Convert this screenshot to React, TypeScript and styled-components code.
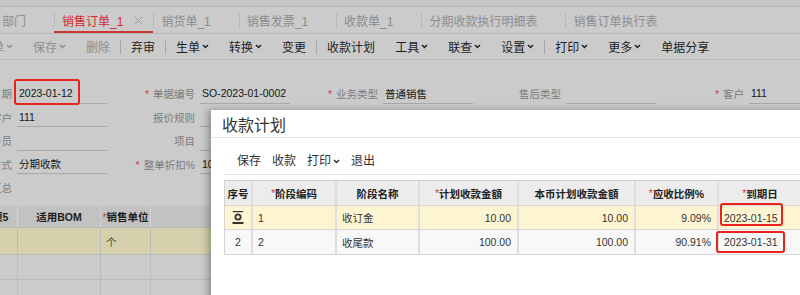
import React from 'react';
import styled, { createGlobalStyle } from 'styled-components';

const Global = createGlobalStyle`
  html, body { margin: 0; padding: 0; }
  body {
    width: 800px; height: 295px; overflow: hidden;
    font-family: "Liberation Sans", "Noto Sans CJK SC", sans-serif;
  }
`;

const Page = styled.div`
  position: relative;
  width: 800px;
  height: 295px;
  overflow: hidden;
  background: #cbcbcb;
  display: flex;
  flex-direction: column;
`;

const TopStrip = styled.div`
  height: 6px;
  flex-shrink: 0;
  background: #c5c5c5;
  border-bottom: 1px solid #b5b5b5;
`;

const TabBar = styled.div`
  height: 26px;
  flex-shrink: 0;
  display: flex;
  align-items: stretch;
  border-bottom: 1px solid #b9b9b9;
  font-size: 12px;
`;

const Tab = styled.div<{ $first?: boolean; $active?: boolean }>`
  position: relative;
  display: flex;
  align-items: center;
  gap: 11px;
  padding: ${p => (p.$first ? '0 28px 0 2px' : p.$active ? '0 10px 0 8px' : '0 28px 0 8px')};
  color: ${p => (p.$active ? '#d12c2c' : '#8b8b8b')};
  white-space: nowrap;
  box-shadow: ${p => (p.$active ? 'inset 0 -2px 0 #cc3535' : 'none')};
  &::before {
    content: '';
    display: ${p => (p.$first ? 'none' : 'block')};
    position: absolute;
    left: 0;
    top: 6px;
    height: 15px;
    width: 1px;
    background: #b7b7b7;
  }
`;

const Toolbar = styled.div`
  height: 25px;
  flex-shrink: 0;
  display: flex;
  align-items: center;
  margin-left: -18px;
  border-bottom: 1px solid #b9b9b9;
  font-size: 12px;
`;

const ToolItem = styled.div<{ $disabled?: boolean }>`
  display: flex;
  align-items: center;
  gap: 2px;
  padding: 0 10px;
  white-space: nowrap;
  color: ${p => (p.$disabled ? '#8e8e8e' : '#1e1e1e')};
`;

const ToolSep = styled.div`
  width: 1px;
  height: 14px;
  background: #a9a9a9;
`;

const Form = styled.div`
  display: grid;
  grid-template-columns: repeat(5, 183px);
  grid-auto-rows: 23.5px;
  margin-left: -76px;
  padding-top: 22px;
  flex-shrink: 0;
`;

const Field = styled.div`
  display: flex;
  align-items: center;
  gap: 5px;
`;

const Label = styled.span`
  width: 88px;
  flex-shrink: 0;
  text-align: right;
  font-size: 10.5px;
  color: #7b7b7b;
  white-space: nowrap;
`;

const Star = styled.span`
  color: #cf3d46;
  margin-right: 4px;
`;

const Value = styled.div`
  position: relative;
  width: 90px;
  height: 20px;
  box-sizing: border-box;
  padding-left: 2px;
  display: flex;
  align-items: center;
  border-bottom: 1px solid #a9a9a9;
  font-size: 10.5px;
  color: #151515;
  white-space: nowrap;
`;

const Mark = styled.span<{ $l: number; $t: number; $w: number; $h: number }>`
  position: absolute;
  left: ${p => p.$l}px;
  top: ${p => p.$t}px;
  width: ${p => p.$w}px;
  height: ${p => p.$h}px;
  box-sizing: border-box;
  border: 2px solid #e8221e;
  border-radius: 3px;
  pointer-events: none;
`;

const BgGrid = styled.div`
  margin-top: 6.5px;
  margin-left: -48px;
  display: flex;
  flex-direction: column;
`;

const BgRow = styled.div<{ $head?: boolean; $yellow?: boolean; $h: number }>`
  display: grid;
  grid-template-columns: 66px 83px 50px 220px 220px;
  height: ${p => p.$h}px;
  box-sizing: border-box;
  background: ${p => (p.$head ? '#c2c2c2' : p.$yellow ? '#d5d1ad' : '#cbcbcb')};
  border-bottom: 1px solid #b9b9b9;
`;

const BgCell = styled.div<{ $head?: boolean }>`
  display: flex;
  align-items: center;
  justify-content: ${p => (p.$head ? 'center' : 'flex-start')};
  padding-left: ${p => (p.$head ? 0 : 5)}px;
  border-right: 1px solid ${p => (p.$head ? '#d3d3d3' : '#bbbbbb')};
  font-size: 10.5px;
  font-weight: ${p => (p.$head ? 700 : 400)};
  color: ${p => (p.$head ? '#1c1c1c' : '#3d4a3d')};
  white-space: nowrap;
  overflow: hidden;
`;

const HeadStar = styled.span`
  color: #d0434b;
  font-weight: 400;
`;

const Modal = styled.div`
  position: absolute;
  left: 211px;
  top: 110px;
  right: -20px;
  bottom: -20px;
  background: #ffffff;
  box-shadow: -3px 0 7px rgba(0, 0, 0, 0.3);
  display: flex;
  flex-direction: column;
`;

const ModalTitle = styled.div`
  height: 27px;
  flex-shrink: 0;
  display: flex;
  align-items: center;
  padding-left: 11px;
  border-bottom: 1px solid #e4e4e4;
  font-size: 16px;
  color: #333;
`;

const ModalBody = styled.div`
  padding-left: 13px;
  display: flex;
  flex-direction: column;
`;

const ModalToolbar = styled.div`
  height: 37px;
  box-sizing: border-box;
  padding: 12px 0 0 13px;
  display: flex;
  align-items: flex-start;
  gap: 11px;
  border-bottom: 1px solid #e2e2e2;
  font-size: 12px;
  color: #333;
  line-height: 23px;
`;

const ModalTool = styled.div`
  display: flex;
  align-items: center;
  gap: 2px;
`;

const PlanTable = styled.div`
  margin-top: 5px;
  border-top: 1px solid #d3d3d3;
  border-left: 1px solid #d3d3d3;
  display: flex;
  flex-direction: column;
`;

const PlanRow = styled.div<{ $bg: string; $h: number }>`
  display: grid;
  grid-template-columns: 28px 84px 83px 99px 117px 83px 84px;
  height: ${p => p.$h}px;
  box-sizing: border-box;
  background: ${p => p.$bg};
  border-bottom: 1px solid #d6d6d6;
`;

const PlanCell = styled.div<{ $align?: 'left' | 'right' | 'center'; $head?: boolean }>`
  position: relative;
  display: flex;
  align-items: center;
  justify-content: ${p => (p.$align === 'right' ? 'flex-end' : p.$align === 'center' ? 'center' : 'flex-start')};
  padding: 0 ${p => (p.$align === 'right' ? 6 : 0)}px 0 ${p => (p.$align === 'left' ? 5 : 0)}px;
  border-right: 2px solid #dedede;
  font-size: 10.5px;
  font-weight: ${p => (p.$head ? 700 : 400)};
  color: ${p => (p.$head ? '#222' : '#333')};
  white-space: nowrap;
`;

const Chevron = () => (
  <svg width="7" height="5" viewBox="0 0 7 5" fill="none">
    <polyline points="1,1 3.5,3.6 6,1" stroke="currentColor" strokeWidth="1.4" />
  </svg>
);

const CloseIcon = () => (
  <svg width="9" height="9" viewBox="0 0 9 9">
    <path d="M0.5 0.5 L8.5 8.5 M8.5 0.5 L0.5 8.5" stroke="#9a9a9a" strokeWidth="1" />
  </svg>
);

const RowIcon = () => (
  <svg width="12" height="13" viewBox="0 0 12 13">
    <rect x="1" y="0" width="10" height="1.2" fill="#333" />
    <circle cx="6" cy="6" r="2.6" fill="none" stroke="#333" strokeWidth="1.8" />
    <rect x="0.5" y="11" width="11" height="2" fill="#333" />
  </svg>
);

const tabs = ['销货单_1', '销售发票_1', '收款单_1', '分期收款执行明细表', '销售订单执行表'];

type Tool = { label: string; menu?: boolean; disabled?: boolean; sep?: boolean };
const tools: Tool[] = [
  { label: '单', menu: true, disabled: true },
  { label: '保存', menu: true, disabled: true },
  { label: '删除', disabled: true },
  { label: '', sep: true },
  { label: '弃审' },
  { label: '', sep: true },
  { label: '生单', menu: true },
  { label: '转换', menu: true },
  { label: '变更' },
  { label: '', sep: true },
  { label: '收款计划' },
  { label: '工具', menu: true },
  { label: '联查', menu: true },
  { label: '设置', menu: true },
  { label: '', sep: true },
  { label: '打印', menu: true },
  { label: '更多', menu: true },
  { label: '单据分享' },
];

type F = { label: string; req?: boolean; value?: string; mark?: boolean };
const formRows: F[][] = [
  [
    { label: '日期', value: '2023-01-12', mark: true },
    { label: '单据编号', req: true, value: 'SO-2023-01-0002' },
    { label: '业务类型', req: true, value: '普通销售' },
    { label: '售后类型', value: '' },
    { label: '客户', req: true, value: '111' },
  ],
  [
    { label: '客户', value: '111' },
    { label: '报价规则', value: '' },
    { label: '销售类型', value: '' },
    { label: '部门', value: '' },
    { label: '币种', value: '' },
  ],
  [
    { label: '业务员', value: '' },
    { label: '项目', value: '' },
    { label: '汇率', value: '' },
    { label: '税率', value: '' },
    { label: '备注', value: '' },
  ],
  [
    { label: '收款方式', value: '分期收款' },
    { label: '整单折扣%', req: true, value: '100.00' },
    { label: '发货地址', value: '' },
    { label: '联系人', value: '' },
    { label: '电话', value: '' },
  ],
];

export default function App() {
  return (
    <Page>
      <Global />
      <TopStrip />
      <TabBar>
        <Tab $first>部门</Tab>
        <Tab $active>
          销售订单_1
          <CloseIcon />
        </Tab>
        {tabs.map(t => (
          <Tab key={t}>{t}</Tab>
        ))}
      </TabBar>
      <Toolbar>
        {tools.map((t, i) =>
          t.sep ? (
            <ToolSep key={i} />
          ) : (
            <ToolItem key={i} $disabled={t.disabled}>
              {t.label}
              {t.menu && <Chevron />}
            </ToolItem>
          )
        )}
      </Toolbar>
      <Form>
        {formRows.map((row, ri) =>
          row.map((f, ci) => (
            <Field key={`${ri}-${ci}`}>
              <Label>
                {f.req && <Star>*</Star>}
                {f.label}
              </Label>
              <Value>
                {f.value}
                {f.mark && <Mark $l={-3} $t={-5} $w={66} $h={26} />}
              </Value>
            </Field>
          ))
        )}
        <Field>
          <Label>汇总</Label>
        </Field>
      </Form>
      <BgGrid>
        <BgRow $head $h={22}>
          <BgCell $head>自定义项5</BgCell>
          <BgCell $head>适用BOM</BgCell>
          <BgCell $head>
            <HeadStar>*</HeadStar>销售单位
          </BgCell>
          <BgCell $head>
            <HeadStar>*</HeadStar>数量
          </BgCell>
          <BgCell $head>单价</BgCell>
        </BgRow>
        <BgRow $yellow $h={27}>
          <BgCell />
          <BgCell />
          <BgCell>个</BgCell>
          <BgCell />
          <BgCell />
        </BgRow>
        <BgRow $h={25}>
          <BgCell />
          <BgCell />
          <BgCell />
          <BgCell />
          <BgCell />
        </BgRow>
        <BgRow $h={25}>
          <BgCell />
          <BgCell />
          <BgCell />
          <BgCell />
          <BgCell />
        </BgRow>
      </BgGrid>

      <Modal>
        <ModalTitle>收款计划</ModalTitle>
        <ModalBody>
          <ModalToolbar>
            <ModalTool>保存</ModalTool>
            <ModalTool>收款</ModalTool>
            <ModalTool>
              打印
              <Chevron />
            </ModalTool>
            <ModalTool>退出</ModalTool>
          </ModalToolbar>
          <PlanTable>
            <PlanRow $bg="#ececec" $h={25}>
              <PlanCell $head $align="center">序号</PlanCell>
              <PlanCell $head $align="center">
                <HeadStar>*</HeadStar>阶段编码
              </PlanCell>
              <PlanCell $head $align="center">阶段名称</PlanCell>
              <PlanCell $head $align="center">
                <HeadStar>*</HeadStar>计划收款金額
              </PlanCell>
              <PlanCell $head $align="center">本币计划收款金額</PlanCell>
              <PlanCell $head $align="center">
                <HeadStar>*</HeadStar>应收比例%
              </PlanCell>
              <PlanCell $head $align="center">
                <HeadStar>*</HeadStar>到期日
              </PlanCell>
            </PlanRow>
            <PlanRow $bg="#fdf4d2" $h={24}>
              <PlanCell $align="center">
                <RowIcon />
              </PlanCell>
              <PlanCell $align="left">1</PlanCell>
              <PlanCell $align="left">收订金</PlanCell>
              <PlanCell $align="right">10.00</PlanCell>
              <PlanCell $align="right">10.00</PlanCell>
              <PlanCell $align="right">9.09%</PlanCell>
              <PlanCell $align="left">
                2023-01-15
                <Mark $l={1} $t={-3} $w={63} $h={23} />
              </PlanCell>
            </PlanRow>
            <PlanRow $bg="#f8f8f8" $h={25}>
              <PlanCell $align="center">2</PlanCell>
              <PlanCell $align="left">2</PlanCell>
              <PlanCell $align="left">收尾款</PlanCell>
              <PlanCell $align="right">100.00</PlanCell>
              <PlanCell $align="right">100.00</PlanCell>
              <PlanCell $align="right">90.91%</PlanCell>
              <PlanCell $align="left">
                2023-01-31
                <Mark $l={-3} $t={1} $w={69} $h={22} />
              </PlanCell>
            </PlanRow>
          </PlanTable>
        </ModalBody>
      </Modal>
    </Page>
  );
}
